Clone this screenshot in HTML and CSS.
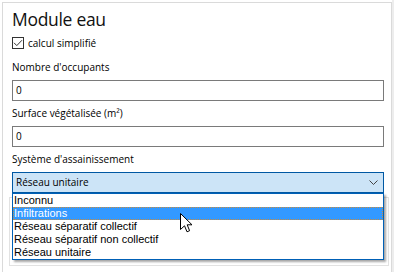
FILE: index.html
```html
<!DOCTYPE html>
<html lang="fr">
<head>
<meta charset="utf-8">
<title>Module eau</title>
<link rel="stylesheet" href="styles.css">
</head>
<body>
<div class="page">
  <div class="panel">
    <h1 class="title">Module eau</h1>
    <label class="check">
      <span class="box"><svg width="10" height="10" viewBox="0 0 10 10"><path d="M1 4.8 L3.8 7.6 L9 2.2" fill="none" stroke="#333" stroke-width="1"/></svg></span>
      <span>calcul simplifié</span>
    </label>
    <div class="field">
      <div class="lbl">Nombre d'occupants</div>
      <div class="input">0</div>
    </div>
    <div class="field">
      <div class="lbl">Surface végétalisée (m²)</div>
      <div class="input">0</div>
    </div>
    <div class="field">
      <div class="lbl">Système d'assainissement</div>
      <div class="combo">
        <div class="select">
          <span>Réseau unitaire</span>
          <svg class="chev" width="9" height="6" viewBox="0 0 9 6"><path d="M0.5 0.5 L4.5 4.5 L8.5 0.5" fill="none" stroke="#444" stroke-width="1"/></svg>
        </div>
        <ul class="list">
          <li>Inconnu</li>
          <li class="hl">Infiltrations</li>
          <li>Réseau séparatif collectif</li>
          <li>Réseau séparatif non collectif</li>
          <li>Réseau unitaire</li>
        </ul>
      </div>
    </div>
    <div class="group"></div>
  </div>
  <div class="strip"></div>
</div>
<svg class="cursor" width="14" height="21" viewBox="0 0 14 21"><path d="M0.5 0.5 L0.5 16.5 L4.5 12.8 L7 18.8 L9.6 17.7 L7.2 11.8 L12 11.8 Z" fill="#fff" stroke="#000" stroke-width="1" stroke-linejoin="miter"/></svg>
</body>
</html>
```
FILE: styles.css
```css
html, body {
  margin: 0;
  padding: 0;
}
body {
  background: #fff;
  font-family: "Open Sans", "Noto Sans", sans-serif;
  font-size: 10px;
  color: #000;
  overflow: hidden;
  position: relative;
  width: 394px;
  height: 272px;
}
.page {
  display: flex;
  height: 272px;
  overflow: hidden;
}
.panel {
  margin: 2px 0 0 2px;
  width: 390px;
  height: 300px;
  box-sizing: border-box;
  border: 1px solid #dadada;
  padding: 5px 0 0 9px;
  flex: none;
}
.strip {
  flex: 1;
  background: #ededed;
}
.title {
  margin: 0;
  font-weight: normal;
  font-size: 17.5px;
  line-height: 22px;
  letter-spacing: -0.3px;
  color: #111;
}
.check {
  display: flex;
  align-items: center;
  gap: 4px;
  margin-top: 6px;
  height: 14px;
  line-height: 14px;
}
.box {
  width: 12px;
  height: 12px;
  box-sizing: border-box;
  border: 1px solid #333;
  background: #fff;
  display: flex;
  align-items: center;
  justify-content: center;
}
.box svg {
  display: block;
}
.field {
  margin-top: 10px;
}
.field + .field {
  margin-top: 5px;
}
.lbl {
  line-height: 14px;
  margin-bottom: 6px;
}
.input {
  width: 372px;
  height: 21px;
  box-sizing: border-box;
  border: 1px solid #7a7a7a;
  padding: 0 3px;
  line-height: 19px;
  background: #fff;
}
.combo {
  position: relative;
  width: 372px;
}
.select {
  height: 21px;
  box-sizing: border-box;
  border: 1px solid #0058a3;
  background: #cce4f7;
  display: flex;
  align-items: center;
  justify-content: space-between;
  padding: 0 5px 0 3px;
  line-height: 19px;
}
.chev {
  display: block;
  margin-top: 1px;
}
.list {
  position: absolute;
  top: 21px;
  left: 0;
  width: 372px;
  box-sizing: border-box;
  margin: 0;
  padding: 0;
  list-style: none;
  border: 1px solid #0060b6;
  background: #fff;
  font-family: "Liberation Sans", Arial, sans-serif;
  font-size: 11px;
  box-shadow: 2px 2px 2px rgba(0, 0, 0, 0.35);
  z-index: 2;
}
.list li {
  height: 13px;
  line-height: 13px;
  padding-left: 1px;
  white-space: nowrap;
}
.list li.hl {
  background: #3399ff;
  color: #fff;
  outline: 1px dotted #c98a3a;
  outline-offset: -1px;
}
.group {
  margin: 4px 0 0 -3px;
  width: 380px;
  height: 69px;
  box-sizing: border-box;
  border: 1px solid #e2e2e2;
}
.cursor {
  position: absolute;
  left: 180px;
  top: 213px;
  z-index: 5;
}
```
